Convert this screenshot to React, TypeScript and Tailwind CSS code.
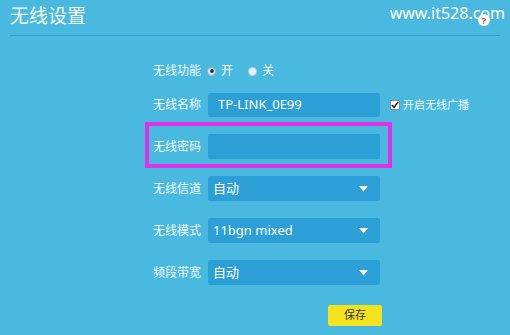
import React from 'react';

const font = { fontFamily: '"Noto Sans", "Noto Sans CJK SC", sans-serif' };

const Arrow = () => (
  <svg width="9" height="6" viewBox="0 0 9 6" className="absolute right-[12px] top-[10px]">
    <path d="M0 0 L9 0 L4.5 5.5 Z" fill="#ffffff" />
  </svg>
);

const Row: React.FC<{ label: string; children: React.ReactNode; className?: string }> = ({ label, children, className }) => (
  <div className={`flex items-center ${className ?? ''}`}>
    <span className="w-[55px] shrink-0 text-[12px] text-[#eef8fc]">{label}</span>
    {children}
  </div>
);

const Select: React.FC<{ value: string }> = ({ value }) => (
  <div className="relative w-[172px] h-[25px] bg-[#2b9fd6] rounded-[2px] flex items-center pl-[5px] text-[13px] text-white">
    {value}
    <Arrow />
  </div>
);

export default function App() {
  return (
    <div className="relative w-[510px] h-[335px] bg-[#49b9e0] overflow-hidden text-white" style={font}>
      <div className="mx-[10px] h-[36px] pt-[3px] border-b border-[#2f9fd0] flex justify-between">
        <h1 className="text-[19px] leading-[26px] text-[#f4fbfe]">无线设置</h1>
      </div>
      <div className="absolute right-[5px] top-[2px] text-[16px] leading-[22px] text-white">www.it528.com</div>
      <div className="absolute left-[478px] top-[14px] w-[12px] h-[12px] rounded-full bg-white flex items-center justify-center text-[9px] font-bold leading-none text-[#d2452a]">?</div>

      <div className="ml-[153px] flex flex-col">
        <Row label="无线功能" className="mt-[25px] h-[20px]">
          <span className="w-[9px] h-[9px] rounded-full bg-[#e6ecf0] border border-[#9ab] flex items-center justify-center ml-[-1px]">
            <span className="w-[4px] h-[4px] rounded-full bg-[#1e3550]" />
          </span>
          <span className="ml-[5px] text-[12px]">开</span>
          <span className="ml-[15px] w-[9px] h-[9px] rounded-full bg-[#e8eef2] border border-[#bcc]" />
          <span className="ml-[5px] text-[12px]">关</span>
        </Row>

        <Row label="无线名称" className="mt-[12px]">
          <div className="w-[172px] h-[24px] bg-[#2b9fd6] rounded-[2px] flex items-center pl-[10px] text-[13px] text-white">TP-LINK_0E99</div>
          <span className="ml-[10px] w-[10px] h-[10px] bg-white border border-[#889] flex items-center justify-center">
            <svg width="8" height="8" viewBox="0 0 8 8"><path d="M1 4 L3 6.5 L7 1" stroke="#223" strokeWidth="1.5" fill="none" /></svg>
          </span>
          <span className="ml-[3px] text-[11px] text-[#eef8fc]">开启无线广播</span>
        </Row>

        <div className="mt-[5px] ml-[-8px] w-[247px] border-[4px] border-[#e030e8] pl-[4px] pt-[8px] pb-[5px] flex items-center">
          <span className="w-[55px] shrink-0 text-[12px] text-[#eef8fc]">无线密码</span>
          <div className="w-[172px] h-[25px] bg-[#2b9fd6] rounded-[2px]" />
        </div>

        <Row label="无线信道" className="mt-[8px]">
          <Select value="自动" />
        </Row>
        <Row label="无线模式" className="mt-[17px]">
          <Select value="11bgn mixed" />
        </Row>
        <Row label="频段带宽" className="mt-[17px]">
          <Select value="自动" />
        </Row>

        <button className="mt-[20px] ml-[175px] w-[54px] h-[21px] bg-[#f6e31f] rounded-[2px] text-[11px] text-[#333]">保存</button>
      </div>
    </div>
  );
}
